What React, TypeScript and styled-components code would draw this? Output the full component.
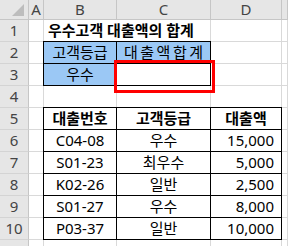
import React from 'react';
import styled, { createGlobalStyle } from 'styled-components';

const Global = createGlobalStyle`
  html, body { margin: 0; padding: 0; background: #fff; }
  body {
    width: 288px;
    height: 246px;
    overflow: hidden;
    font-family: "Noto Sans", "Noto Sans CJK KR", sans-serif;
  }
`;

const Sheet = styled.div`
  position: relative;
  display: grid;
  grid-template-columns: 29px 15px 73px 94px 71px 1fr;
  grid-template-rows: 20px repeat(11, 22px);
  width: 288px;
  height: 246px;
  overflow: hidden;
  background: #fff;
`;

const Corner = styled.div`
  position: relative;
  background: #e6e6e6;
  border-right: 1px solid #c6c6c6;
  border-bottom: 1px solid #c6c6c6;
  box-sizing: border-box;
`;

const CornerTriangle = styled.svg`
  position: absolute;
  right: 4px;
  bottom: 3px;
`;

const ColHead = styled.div`
  background: #e6e6e6;
  border-right: 1px solid #c6c6c6;
  border-bottom: 1px solid #c6c6c6;
  box-sizing: border-box;
  display: flex;
  align-items: center;
  justify-content: center;
  color: #444;
  font-size: 15px;
  line-height: 1;
`;

const RowHead = styled.div`
  background: #e6e6e6;
  border-right: 1px solid #c6c6c6;
  border-bottom: 1px solid #d4d4d4;
  box-sizing: border-box;
  display: flex;
  align-items: center;
  justify-content: center;
  color: #444;
  font-size: 15px;
  line-height: 1;
`;

type CellProps = {
  $boxed?: boolean;
  $fill?: boolean;
  $align?: 'left' | 'center' | 'right';
  $bold?: boolean;
  $span?: number;
  $spread?: number;
};

const Cell = styled.div<CellProps>`
  box-sizing: border-box;
  grid-column: span ${(p) => p.$span ?? 1};
  border-right: 1px solid ${(p) => (p.$boxed ? '#000' : '#d9d9d9')};
  border-bottom: 1px solid ${(p) => (p.$boxed ? '#000' : '#d9d9d9')};
  box-shadow: ${(p) =>
    p.$boxed ? '-1px 0 0 #000, 0 -1px 0 #000, -1px -1px 0 #000' : 'none'};
  background: ${(p) => (p.$fill ? '#9bc8f5' : '#fff')};
  display: flex;
  align-items: center;
  justify-content: ${(p) =>
    p.$align === 'right' ? 'flex-end' : p.$align === 'left' ? 'flex-start' : 'center'};
  padding: ${(p) => (p.$align === 'right' ? '0 7px 0 0' : p.$align === 'left' ? '0 0 0 4px' : '0')};
  font-size: 15px;
  font-weight: ${(p) => (p.$bold ? 700 : 400)};
  letter-spacing: ${(p) => p.$spread ?? 0}px;
  text-indent: ${(p) => p.$spread ?? 0}px;
  color: #000;
  white-space: nowrap;
  line-height: 1;
  overflow: visible;
`;

const Highlight = styled.div`
  position: absolute;
  left: 114px;
  top: 60px;
  width: 101px;
  height: 33px;
  box-sizing: border-box;
  border: 3px solid #ff0000;
  pointer-events: none;
`;

const loans = [
  ['C04-08', '우수', '15,000'],
  ['S01-23', '최우수', '5,000'],
  ['K02-26', '일반', '2,500'],
  ['S01-27', '우수', '8,000'],
  ['P03-37', '일반', '10,000'],
];

const Blank = () => <Cell />;

export default function App() {
  return (
    <>
      <Global />
      <Sheet>
        <Corner>
          <CornerTriangle width="12" height="12" viewBox="0 0 12 12">
            <polygon points="12,0 12,12 0,12" fill="#bdbdbd" />
          </CornerTriangle>
        </Corner>
        {['A', 'B', 'C', 'D', ''].map((c, i) => (
          <ColHead key={i}>{c}</ColHead>
        ))}

        <RowHead>1</RowHead>
        <Blank />
        <Cell $span={2} $align="left" $bold>우수고객 대출액의 합계</Cell>
        <Blank />
        <Blank />

        <RowHead>2</RowHead>
        <Blank />
        <Cell $boxed $fill>고객등급</Cell>
        <Cell $boxed $fill $spread={2.5}>대출액합계</Cell>
        <Blank />
        <Blank />

        <RowHead>3</RowHead>
        <Blank />
        <Cell $boxed $fill>우수</Cell>
        <Cell $boxed />
        <Blank />
        <Blank />

        <RowHead>4</RowHead>
        <Blank />
        <Blank />
        <Blank />
        <Blank />
        <Blank />

        <RowHead>5</RowHead>
        <Blank />
        <Cell $boxed $bold>대출번호</Cell>
        <Cell $boxed $bold>고객등급</Cell>
        <Cell $boxed $bold>대출액</Cell>
        <Blank />

        {loans.map((r, i) => (
          <React.Fragment key={r[0]}>
            <RowHead>{i + 6}</RowHead>
            <Blank />
            <Cell $boxed>{r[0]}</Cell>
            <Cell $boxed>{r[1]}</Cell>
            <Cell $boxed $align="right">{r[2]}</Cell>
            <Blank />
          </React.Fragment>
        ))}

        <RowHead />
        <Blank />
        <Blank />
        <Blank />
        <Blank />
        <Blank />

        <Highlight />
      </Sheet>
    </>
  );
}
